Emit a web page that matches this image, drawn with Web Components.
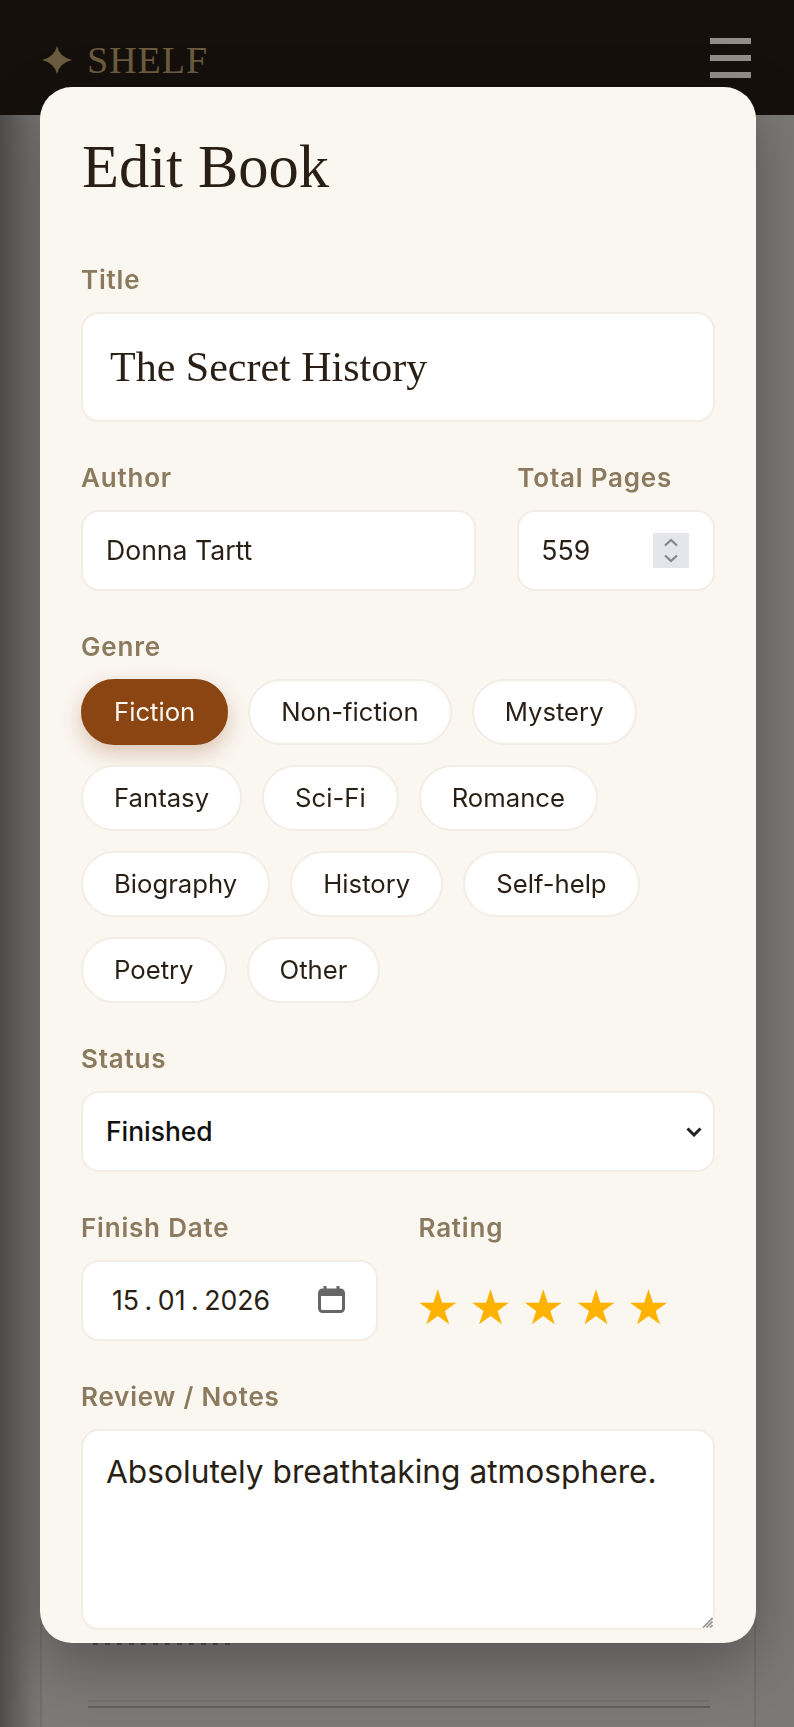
<!DOCTYPE html>
<html lang="en">
<head>
<meta charset="utf-8">
<title>Shelf – Edit Book</title>
<style>
  html, body { margin: 0; padding: 0; height: 1727px; overflow: hidden; }
  body { font-family: Inter, "Liberation Sans", sans-serif; color: #2a1f14; background: #f6f2ec; }
</style>
</head>
<body>
<shelf-header></shelf-header>
<shelf-backdrop></shelf-backdrop>
<book-modal heading="Edit Book">
  <form-field>
    <span slot="label">Title</span>
    <box-control kind="title">The Secret History</box-control>
  </form-field>
  <field-row columns="2fr 1fr">
    <form-field>
      <span slot="label">Author</span>
      <box-control>Donna Tartt</box-control>
    </form-field>
    <form-field>
      <span slot="label">Total Pages</span>
      <box-control kind="number">559</box-control>
    </form-field>
  </field-row>
  <form-field>
    <span slot="label">Genre</span>
    <chip-group>
      <genre-chip selected>Fiction</genre-chip>
      <genre-chip>Non-fiction</genre-chip>
      <genre-chip>Mystery</genre-chip>
      <genre-chip>Fantasy</genre-chip>
      <genre-chip>Sci-Fi</genre-chip>
      <genre-chip>Romance</genre-chip>
      <genre-chip>Biography</genre-chip>
      <genre-chip>History</genre-chip>
      <genre-chip>Self-help</genre-chip>
      <genre-chip>Poetry</genre-chip>
      <genre-chip>Other</genre-chip>
    </chip-group>
  </form-field>
  <form-field>
    <span slot="label">Status</span>
    <box-control kind="select">Finished</box-control>
  </form-field>
  <field-row columns="1fr 1fr">
    <form-field>
      <span slot="label">Finish Date</span>
      <box-control kind="date">15<i>.</i>01<i>.</i>2026</box-control>
    </form-field>
    <form-field>
      <span slot="label">Rating</span>
      <star-rating value="5"></star-rating>
    </form-field>
  </field-row>
  <form-field last>
    <span slot="label">Review / Notes</span>
    <box-control kind="area">Absolutely breathtaking atmosphere.</box-control>
  </form-field>
</book-modal>

<script>
function shadow(el, html) {
  const r = el.attachShadow({ mode: 'open' });
  r.innerHTML = html;
  return r;
}

customElements.define('shelf-header', class extends HTMLElement {
  connectedCallback() {
    shadow(this, `<style>
      :host { display: flex; align-items: center; justify-content: space-between; height: 115px; box-sizing: border-box;
        padding: 0 43px 0 42px; background: #15100b; }
      .brand { display: flex; align-items: center; gap: 15px; color: #6c5c40; margin-top: 4px; }
      .star { display: block; fill: currentColor; }
      .name { font: 38px/1 "Liberation Serif", serif; letter-spacing: 1px; }
      .menu { display: flex; flex-direction: column; gap: 11px; width: 41px; margin-top: 1px; }
      .menu span { height: 6px; background: #918d8a; }
    </style>
    <div class="brand"><svg class="star" width="30" height="28" viewBox="0 0 30 28"><path d="M15 0Q17.5 11 30 14Q17.5 17 15 28Q12.5 17 0 14Q12.5 11 15 0Z"/></svg><span class="name">SHELF</span></div>
    <div class="menu"><span></span><span></span><span></span></div>`);
  }
});

customElements.define('shelf-backdrop', class extends HTMLElement {
  connectedCallback() {
    shadow(this, `<style>
      :host { display: block; height: 1612px; box-sizing: border-box; padding: 4px 38px 0 40px;
        background: linear-gradient(90deg, rgba(0,0,0,.36), rgba(0,0,0,.06) 32px, transparent 42px), #f6f2ec; position: relative; }
      .card { height: 100%; box-sizing: border-box; border: 2px solid #e4dfd6; border-bottom: 0; background: #f8f5f0;
        display: flex; flex-direction: column; justify-content: flex-end; padding: 0 44px 19px 46px; }
      .text-edge { width: 139px; height: 2px; margin: 0 0 61px 5px; opacity: .4;
        background: repeating-linear-gradient(90deg, #1f1a14 0 5px, transparent 5px 12px); }
      .rule { height: 2px; background: #c6c1b8; box-shadow: 0 -6px 0 #eae6df; }
      .scrim { position: absolute; inset: 0; background: rgba(0,0,0,.5); }
    </style>
    <div class="card"><div class="text-edge"></div><div class="rule"></div></div>
    <div class="scrim"></div>`);
  }
});

customElements.define('book-modal', class extends HTMLElement {
  connectedCallback() {
    const h = this.getAttribute('heading');
    shadow(this, `<style>
      :host { position: fixed; top: 87px; left: 40px; width: 716px; height: 1556px; box-sizing: border-box; display: block;
        padding: 42px 41px 0; background: #faf6f0; border-radius: 32px; overflow: hidden;
        box-shadow: 0 20px 60px rgba(0,0,0,.3); }
      h2 { margin: 0 0 60px 1px; font: 400 60.5px/76px "Liberation Serif", serif; color: #2a1f14; }
    </style>
    <h2>${h}</h2><slot></slot>`);
  }
});

customElements.define('form-field', class extends HTMLElement {
  connectedCallback() {
    shadow(this, `<style>
      :host { display: block; margin-bottom: 41px; }
      :host([last]) { margin-bottom: 0; }
      .label { height: 31px; margin-bottom: 16px; font: 600 26px/30px Inter, sans-serif;
        letter-spacing: .8px; color: #8b7a5e; white-space: nowrap; }
    </style>
    <div class="label"><slot name="label"></slot></div><slot></slot>`);
  }
});

customElements.define('field-row', class extends HTMLElement {
  connectedCallback() {
    shadow(this, `<style>
      :host { display: grid; column-gap: 41px; grid-template-columns: ${this.getAttribute('columns')}; }
    </style><slot></slot>`);
  }
});

customElements.define('box-control', class extends HTMLElement {
  connectedCallback() {
    const kind = this.getAttribute('kind') || 'text';
    const extras = {
      number: `<svg class="spin" width="36" height="35" viewBox="0 0 36 35"><rect width="36" height="35" fill="#e5e5ec"/><path d="M12 12.5l6-5.5 6 5.5M12 22.5l6 5.5 6-5.5" fill="none" stroke="#85858c" stroke-width="2.2"/></svg>`,
      select: `<svg class="chev" width="16" height="10" viewBox="0 0 16 10"><path d="M1.5 1.5L8 8l6.5-6.5" fill="none" stroke="#222" stroke-width="3"/></svg>`,
      date: `<svg class="cal" width="27" height="27" viewBox="0 0 27 27"><path d="M7 0v5M20 0v5" stroke="#666" stroke-width="3"/><rect x="1.5" y="4" width="24" height="21.5" rx="3" fill="none" stroke="#666" stroke-width="3"/><rect x="1.5" y="4" width="24" height="6" fill="#666"/></svg>`,
      area: `<svg class="grip" width="11" height="11" viewBox="0 0 11 11"><path d="M10.5 1L1 10.5M10.5 4.5L4.5 10.5M10.5 8L8 10.5" stroke="#969696" stroke-width="1.6"/></svg>`
    };
    shadow(this, `<style>
      :host { display: flex; align-items: center; justify-content: space-between; box-sizing: border-box; height: 81px;
        padding: 0 23px; background: #fff; border: 2px solid #f2ede5; border-radius: 18px;
        font: 400 26.6px/1 Inter, sans-serif; color: #2a1f14; position: relative; white-space: nowrap; }
      :host([kind=title]) { height: 110px; padding: 0 27px; font: 400 42px/1 "Liberation Serif", serif; }
      :host([kind=select]) { color: #111; font-weight: 500; font-size: 26.4px; padding-right: 11px; }
      :host([kind=number]) { padding: 0 24px 0 22px; }
      :host([kind=date]) { padding: 0 31px 0 29px; font-size: 26.7px; }
      :host([kind=area]) { height: 201px; align-items: flex-start; padding: 23px 23px; font-size: 31.7px; line-height: 36px; }
      ::slotted(i) { font-style: normal; margin: 0 5.5px; }
      .grip { position: absolute; right: 0; bottom: 0; }
      .cal { margin-top: -2px; }
    </style><span><slot></slot></span>${extras[kind] || ''}`);
  }
});

customElements.define('chip-group', class extends HTMLElement {
  connectedCallback() {
    shadow(this, `<style>
      :host { display: flex; flex-wrap: wrap; gap: 20px; }
    </style><slot></slot>`);
  }
});

customElements.define('genre-chip', class extends HTMLElement {
  connectedCallback() {
    shadow(this, `<style>
      :host { display: block; box-sizing: border-box; height: 66px; padding: 0 31px; white-space: nowrap;
        background: #fff; border: 2px solid #f2ede5; border-radius: 33px; font: 400 25.7px/62px Inter, sans-serif; color: #2a1f14; }
      :host([selected]) { background: #8b4513; border-color: #8b4513; color: #faf6f0;
        box-shadow: 0 8px 20px rgba(139,69,19,.28); }
    </style><slot></slot>`);
  }
});

customElements.define('star-rating', class extends HTMLElement {
  connectedCallback() {
    const n = +this.getAttribute('value');
    shadow(this, `<style>
      :host { display: flex; height: 81px; align-items: center; color: #ffb300; margin-left: -7px; padding-top: 13px; box-sizing: border-box; }
      span { width: 52.7px; text-align: center; font: 48px/1 "DejaVu Sans", sans-serif; }
    </style>${'<span>★</span>'.repeat(n)}`);
  }
});
</script>
</body>
</html>
